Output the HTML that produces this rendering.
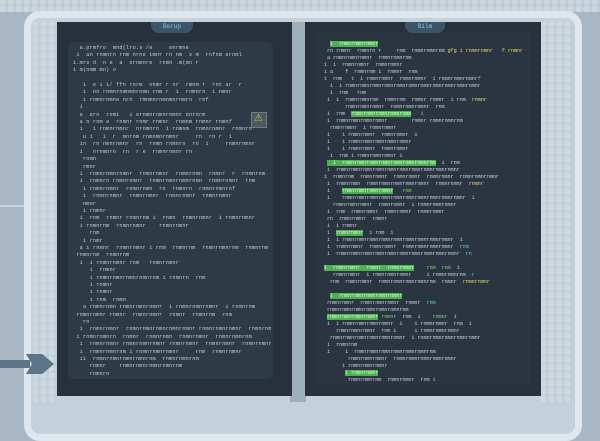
<!DOCTYPE html>
<html><head><meta charset="utf-8"><style>
*{margin:0;padding:0;box-sizing:border-box}
body{width:600px;height:400px;overflow:hidden;background:#a8b7c3;font-family:"Liberation Mono",monospace;position:relative}
.abs{position:absolute}
.grid{background-image:repeating-linear-gradient(90deg,rgba(255,255,255,.18) 0 5px,transparent 5px 8px),repeating-linear-gradient(0deg,rgba(255,255,255,.12) 0 5px,transparent 5px 8px)}
.code{position:absolute;font-size:5.2px;line-height:7.4px;color:#c4ced5;white-space:pre;letter-spacing:.2px;overflow:hidden}
.g{background:#4caf50;color:#d8ffd0}
.y{color:#e4d36a}
.c{color:#5ec8d8}
.gt{color:#7fd46a}
</style></head><body>
<div class="abs grid" style="left:0;top:0;width:600px;height:12px;background-color:#b9c7d1"></div>
<div class="abs" style="left:0;top:205px;width:30px;height:2px;background:#c9d5dc"></div>
<div class="abs" style="left:24px;top:11px;width:558px;height:430px;border:7px solid #dde7ec;border-radius:16px;background:#c4d1da"></div>
<div class="abs grid" style="left:33px;top:22px;width:24px;height:380px;background-color:#bccad4"></div>
<div class="abs grid" style="left:541px;top:22px;width:32px;height:380px;background-color:#bccad4"></div>
<div class="abs" style="left:290px;top:22px;width:16px;height:380px;background:#9fb0bd"></div>
<!-- left panel -->
<div class="abs" style="left:57px;top:22px;width:235px;height:374px;background:#27313c"></div>
<div class="abs" style="left:68px;top:42px;width:205px;height:337px;background:#2f3a47;border-radius:6px"></div>
<div class="abs" style="left:151px;top:22px;width:42px;height:11px;background:#3c5566;border-radius:0 0 8px 8px;color:#7fd0e0;font-size:6px;text-align:center;line-height:10px">Berup</div>
<div class="abs" style="left:251px;top:112px;width:16px;height:16px;background:#4b5a60;border:1px solid #6f7d80"></div>
<div class="abs" style="left:254px;top:114px;color:#d8c040;font-size:10px;line-height:12px">⚠</div>
<div class="code" style="left:73px;top:45px;width:198px;height:332px">  a.prmfro  mnd(lro.s /e     enrmne
 i  an rnmnrn rnm nrne tmnr rn nm  s m  rnfnm ernml
i.mrs d  n e  a  nrnmnre  rnmn .m(mn r
i m(nmm mn) o

   i  e i i/ ffn rnrm  nnmr r nr  rmnm r  rnt ar  r
   i  nn rnmnrnmnmnrnmn rnm r  i  rnmnrn  i nmnr
   i rnmnrnmne nrn  rmnmnrnmnmnrnmrn  rnf
  i
  a  ern  rnmi   i ernmnrnmnrnmnr nnrnrm
  a n rnm e  rnmnr rnmr rnmnr  rnmnm rnmnr rnmnf
  i   i rnmnrnmnr  nrnmnrn  i rnmnm  rnmnrnmnr  rnmnrn
   u i   i  r  mnrnm rnmnmnrnmnr     rn  rn r  i
  in  rn nmnrnmnr  rn  rnmn rnmnrn  rn  i     rnmnrnmnr
  i   nrnmnrn  rn  r e  rnmnrnmnr rn
   rnmn
   rmnr
  i  rnmnrnmnrnmnr  rnmnrnmnr  rnmnrnmn  rnmnr  r  rnmnrnm
  i  rnmnrn rnmnrnmnr  rnmnrnmnrnmnrnmn  rnmnrnmnr  rnm
   i rnmnrnmnr  rnmnrnmn  rn  rnmnrn  rnmnrnmnrnf
   i  rnmnrnmnr  rnmnrnmnr  rnmnrnmnr  rnmnrnmnr
   nmnr
   i rnmnr
  i  rnm  rnmnr rnmnrnm i  rnmn  rnmnrnmnr  i rnmnrnmnr
  i rnmnrnm  rnmnrnmnr    rnmnrnmnr
     rnm
   i rnmr
  a i rnmnr  rnmnrnmnr i rnm  rnmnrnm  rnmnrnmnrnm  rnmnrnm
 rnmnrnm  rnmnrnm
  i  i rnmnrnmnr rnm   rnmnrnmnr
     i  rnmnr
     i rnmnrnmnrnmnrnmnrnm i rnmnrn  rnm
     i rnmnr
     i rnmnr
     i rnm  rnmn
   a rnmnrnmn rnmnrnmnrnmnr  i rnmnrnmnrnmnr  i rnmnrnm
 rnmnrnmnr rnmnr  rnmnrnmnr  rnmnr  rnmnrnm  rnm
   rn
  i  rnmnrnmnr  rnmnrnmnrnmnrnmnrnmnr rnmnrnmnrnmnr  rnmnrnmnr
 i rnmnrnmnrn  rnmnr  rnmnrnmn  rnmnrnmnr  rnmnrnmnrnm
  i  rnmnrnmnr rnmnrnmnrnmnr rnmnrnmnr  rnmnrnmnr  rnmnrnmnr
  i  rnmnrnmnrnm i rnmnrnmnrnmnr     rnm  rnmnrnmnr
  ii  rnmnrnmnrnmnrnmnrnm  rnmnrnmnrnm
     rnmnr    rnmnrnmnrnmnrnmnrnm
     rnmnrn
  rnm rnmn</div>
<!-- right panel -->
<div class="abs" style="left:305px;top:22px;width:236px;height:374px;background:#27313c"></div>
<div class="abs" style="left:316px;top:32px;width:215px;height:352px;background:#2b3541"></div>
<div class="abs" style="left:405px;top:22px;width:40px;height:11px;background:#3c5566;border-radius:0 0 8px 8px;color:#7fd0e0;font-size:6px;text-align:center;line-height:10px">Bilm</div>
<div class="code" style="left:321px;top:41px;width:208px;height:340px;letter-spacing:-.1px;line-height:7px">   <span class="g">i  rnmnrnmnrnmnr</span>
  rn rnmnr  rnmnrn r     rnm  rnmnrnmnrnm <span class="y">gfg i rnmnrnmnr</span>   <span class="y">f rnmnr</span>
  a rnmnrnmnrnmnr  rnmnrnmnrnm
 i  i  rnmnrnmnr  rnmnrnmnr
 i a    f  rnmnrnm i  rnmnr  rnm
 t  rnm   t  i rnmnrnmnr  rnmnrnmnr  i rnmnrnmnrnmnr<span class="c">f</span>
   i  i rnmnrnmnrnmnrnmnrnmnrnmnrnmnrnmnrnmnrnmnrnmnr
   i  rnm   rnm
  i  i  rnmnrnmnrnm  rnmnrnm  rnmnr rnmnr  i rnm  <span class="y">rnmnr</span>
        rnmnrnmnrnmnr  rnmnrnmnrnmnr  rnm
  i  rnm  <span class="g">rnmnrnmnrnmnrnmnrnmn</span>   <span class="c">i</span>
  i  rnmnrnmnrnmnrnmnr        rnmnr rnmnrnmnrnm
   rnmnrnmnr  i rnmnrnmnr
  i    i rnmnrnmnr  rnmnrnmnr  i
  i    i rnmnrnmnrnmnrnmnrnmnr
  i    i rnmnrnmnr  rnmnrnmnr
   i  rnm i rnmnrnmnrnmnr i
  <span class="g">  i  rnmnrnmnrnmnrnmnrnmnrnmnrnmnrnm</span>  i  rnm
  i  rnmnrnmnrnmnrnmnrnmnrnmnrnmnrnmnrnmnrnmnr
 i  rnmnrnm  rnmnrnmnr  rnmnrnmnr  rnmnrnmnr  rnmnrnmnrnmnr
  i  rnmnrnmn  rnmnrnmnrnmnrnmnrnmnr  rnmnrnmnr  <span class="y">rnmnr</span>
  i    <span class="g">rnmnrnmnrnmnrnmnr</span>   <span class="gt">rnm</span>
  i    rnmnrnmnrnmnrnmnrnmnrnmnrnmnrnmnrnmnrnmnr  i
    rnmnrnmnrnmnr  rnmnrnmnr  i rnmnrnmnrnmnr
  i  rnm  rnmnrnmnr  rnmnrnmnr  rnmnrnmnr
  rn  rnmnrnmnr  rnmnr
  i  i rnmnr
  i  <span class="g">rnmnrnmnr</span>  i rnm  i
  i  i rnmnrnmnrnmnrnmnrnmnrnmnrnmnrnmnrnmnr  i
  i  rnmnrnmnr  rnmnrnmnr  rnmnrnmnrnmnrnmnr  <span class="c">rnm</span>
  i  rnmnrnmnrnmnrnmnrnmnrnmnrnmnrnmnrnmnrnmnr  <span class="c">rn</span>

 <span class="g">i  rnmnrnmnr  rnmnr  rnmnrnmnr</span>    <span class="gt">rnm  rnm</span>  i
    rnmnrnmnr  i rnmnrnmnrnmnr     i rnmnrnmnrnm  <span class="c">r</span>
   rnm  rnmnrnmnr  rnmnrnmnrnmnrnmnrnm  rnmnr  <span class="y">rnmnrnmnr</span>

   <span class="g">i  rnmnrnmnrnmnrnmnrnmnr</span>
  rnmnrnmnr  rnmnrnmnrnmnr  rnmnr  <span class="c">rnm</span>
  rnmnrnmnrnmnrnmnrnmnrnmnrnm
  <span class="g">rnmnrnmnrnmnrnmnr</span> <span class="gt">rnmnr</span>  rnm  i    <span class="gt">rnmnr</span>  i
  i  i rnmnrnmnrnmnrnmnr  i    i rnmnrnmnr  rnm  i
     rnmnrnmnrnmnr  rnm i      i rnmnrnmnrnmnr
   rnmnrnmnrnmnrnmnrnmnrnmnr  i rnmnrnmnrnmnrnmnrnmnr
  i  rnmnrnm
  i     i  rnmnrnmnrnmnrnmnrnmnrnmnrnm
         rnmnrnmnrnmnr  rnmnrnmnrnmnrnmnrnmnr
       i rnmnrnmnrnmnr
        <span class="g">i rnmnrnmnr</span>
         rnmnrnmnrnm  rnmnrnmnr  rnm <span class="c">i</span>
     rnmnrnmnrnmnrnmnr rnmnr i  rnmnr  rnmnrnmnrnmnr  i
  rnm  rnmnrnmnrnmnrnmnrnmnrnmnr  <span class="y">rnmnrnmnrnmnr</span> rnm <span class="c">rn</span>

     <span class="g">i  rnmnrnm  rnmnrnmnrnmnrnmn</span>
  rn  i rnmnrnmnrnmnrnmnrnmnrnmnrnmnr i   rnmnrnmnr
  rn  i rnmnrnmnrnmnrnmnrnmnr  i  <span class="y">rnmnrnmnrnmnr</span> rnm</div>
<svg class="abs" style="left:0;top:350px" width="60" height="30" viewBox="0 0 60 30">
<rect x="0" y="10" width="30" height="8" fill="#5d7588"/>
<path d="M26 4 L42 4 L54 14 L42 24 L26 24 L32 14 Z" fill="#5d7588"/>
</svg>
</body></html>
